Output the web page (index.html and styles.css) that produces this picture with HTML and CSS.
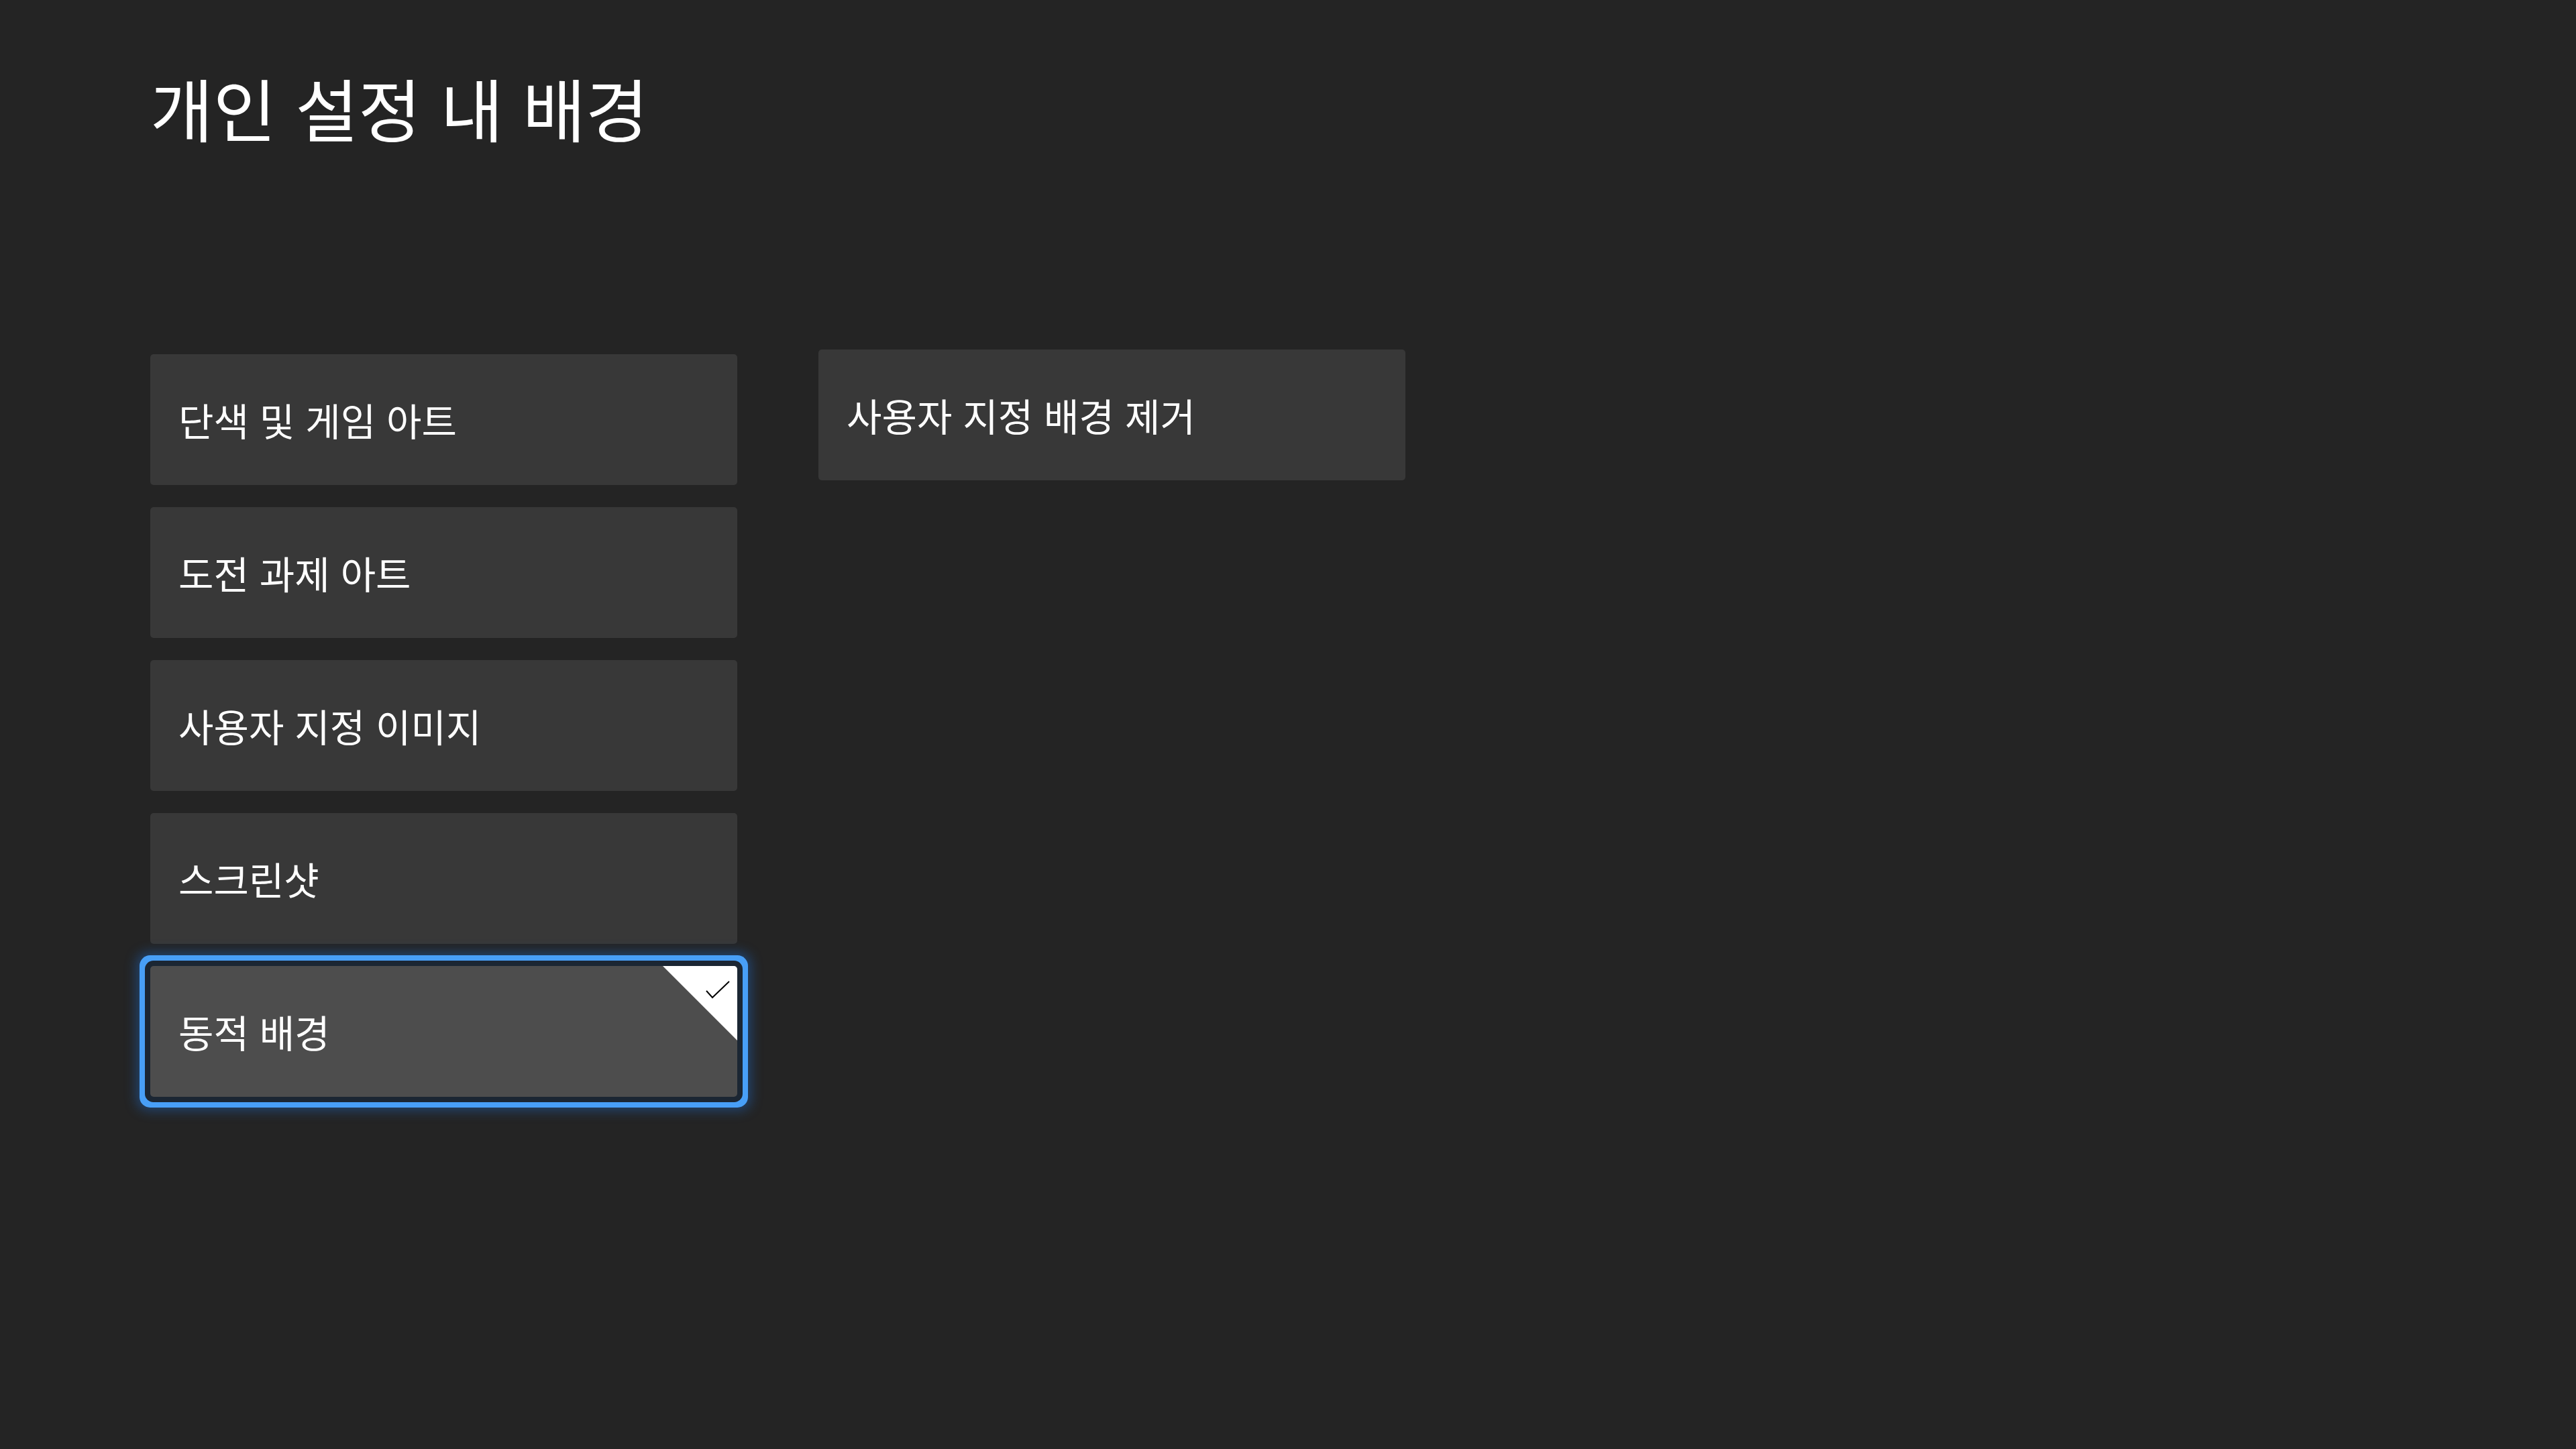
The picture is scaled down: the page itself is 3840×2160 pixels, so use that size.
FILE: index.html
```html
<!DOCTYPE html>
<html lang="ko">
<head>
    <meta charset="UTF-8">
    <title>개인 설정 내 배경</title>
    <link rel="stylesheet" href="styles.css">
</head>
<body>

    <div class="page">
        <h1 class="page-title">개인 설정 내 배경</h1>

        <div class="columns">
            <div class="column column-left">
                <div class="tile">단색 및 게임 아트</div>
                <div class="tile">도전 과제 아트</div>
                <div class="tile">사용자 지정 이미지</div>
                <div class="tile">스크린샷</div>
                <div class="tile tile-selected">
                    동적 배경
                    <svg class="check-corner" width="111" height="111" viewBox="0 0 111 111">
                        <polygon points="0,0 111,0 111,111" fill="#ffffff"/>
                        <polyline points="65,37 74,47 99,23" fill="none" stroke="#000000" stroke-width="2"/>
                    </svg>
                </div>
            </div>

            <div class="column column-right">
                <div class="tile">사용자 지정 배경 제거</div>
            </div>
        </div>
    </div>

</body>
</html>
```

FILE: styles.css
```css
/* Reset default margins and paddings */
* {
    margin: 0;
    padding: 0;
    box-sizing: border-box;
}

body {
    background-color: #242424;
    color: #FFFFFF;
    font-family: "Noto Sans CJK KR", "Noto Sans", sans-serif;
    width: 3840px;
    height: 2160px;
    overflow: hidden;
}

.page {
    padding: 0 0 0 224px;
}

.page-title {
    font-size: 102px;
    font-weight: 400;
    line-height: 120px;
    padding-top: 100px;
    height: 521px;
    white-space: nowrap;
}

.columns {
    display: flex;
    align-items: flex-start;
    gap: 121px;
}

.column {
    display: flex;
    flex-direction: column;
    gap: 33px;
    width: 875px;
}

.column-left {
    padding-top: 7px;
}

.tile {
    position: relative;
    height: 195px;
    background-color: #383838;
    border-radius: 5px;
    display: flex;
    align-items: center;
    padding-left: 42px;
    font-size: 57px;
    line-height: 1;
    white-space: nowrap;
}

.tile-selected {
    background-color: #4d4d4d;
    box-shadow:
        0 0 0 8px #1b2633,
        0 0 0 16px #489ff7,
        0 0 18px 20px rgba(30, 110, 210, 0.45);
}

.check-corner {
    position: absolute;
    top: 0;
    right: 0;
    border-top-right-radius: 5px;
}
```
